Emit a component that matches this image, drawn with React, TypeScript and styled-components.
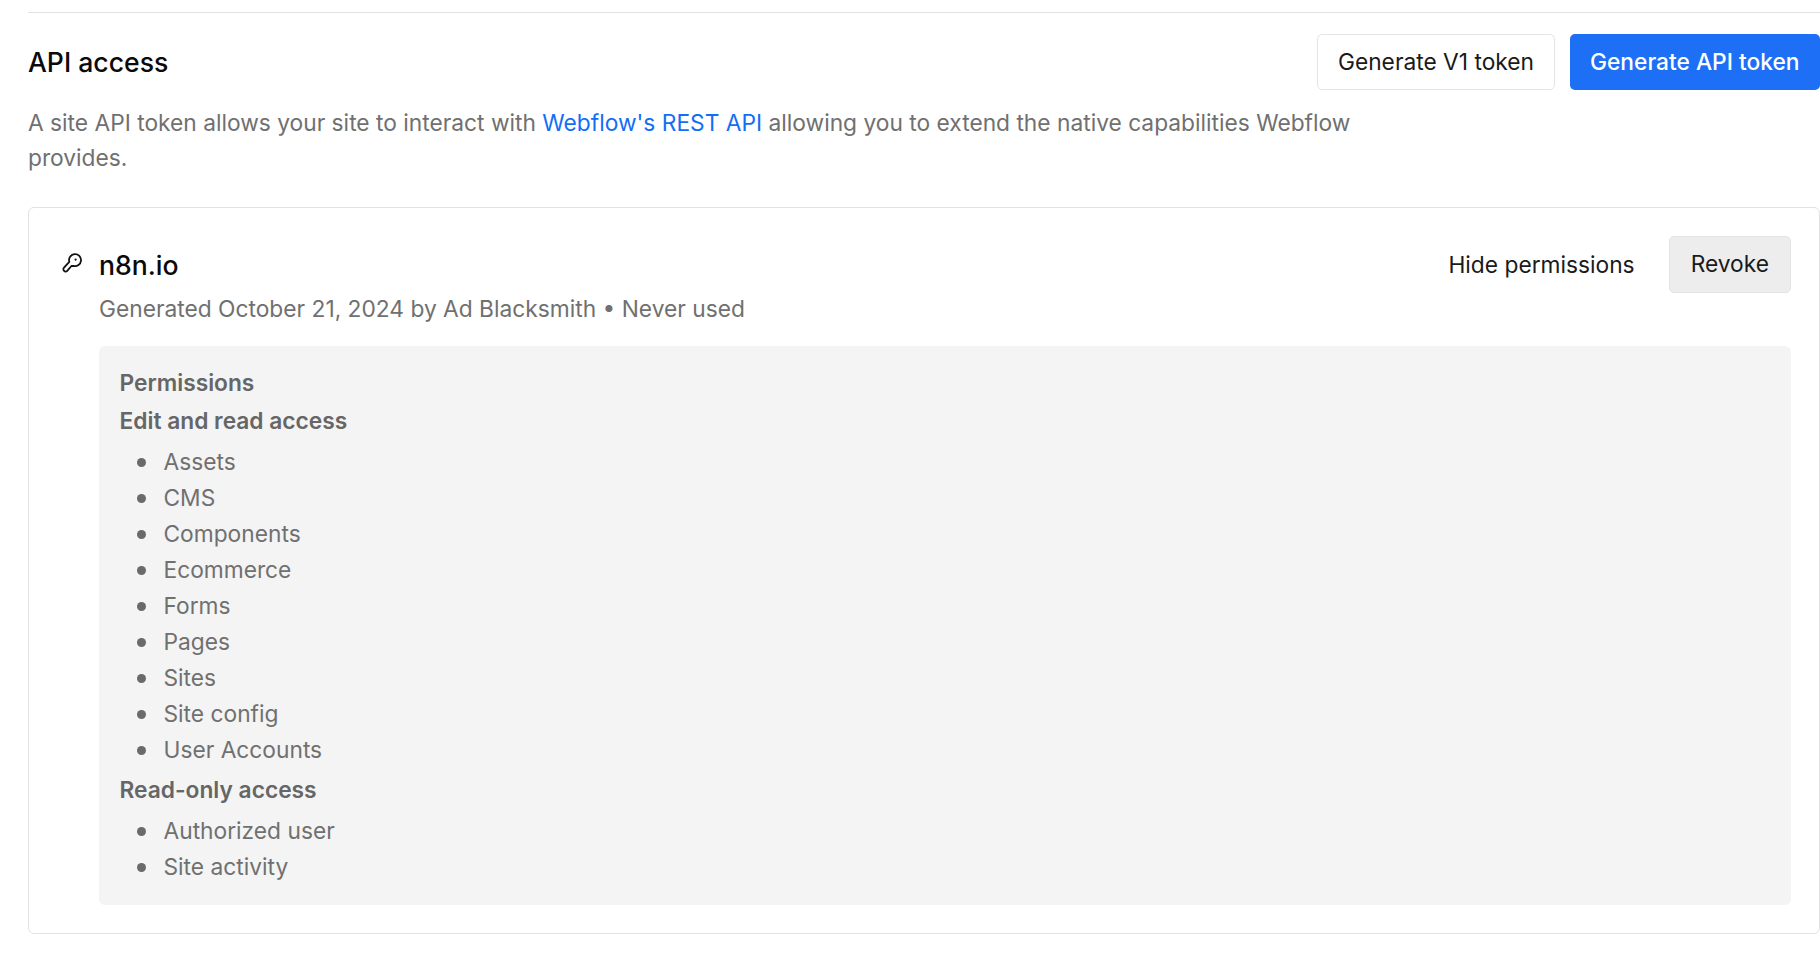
import React from 'react'
import styled, { createGlobalStyle } from 'styled-components'

const GlobalStyle = createGlobalStyle`
    html, body {
        margin: 0;
        padding: 0;
        background: #fff;
    }
    body {
        font-family: Inter, "Liberation Sans", sans-serif;
        font-size: 22.75px;
        color: #707070;
        overflow: hidden;
    }
`

const Page = styled.div`
    width: 1820px;
    height: 980px;
    padding: 12px 0 0 28px;
    box-sizing: border-box;
`

const Divider = styled.div`
    height: 1px;
    background: #e2e2e2;
`

const Header = styled.div`
    display: flex;
    align-items: center;
    justify-content: space-between;
    margin-top: 21px;
`

const Title = styled.h2`
    margin: 0;
    font-size: 26.6px;
    line-height: 32px;
    font-weight: 500;
    color: #0a0a0a;
`

const HeaderActions = styled.div`
    display: flex;
    gap: 15px;
`

const Button = styled.button<{ $variant?: 'primary' | 'outline' | 'muted' }>`
    height: ${p => (p.$variant === 'muted' ? 57 : 56)}px;
    padding: 0 ${p => (p.$variant === 'primary' ? 20.5 : p.$variant === 'muted' ? 21 : 19.5)}px 2px;
    box-sizing: border-box;
    border-radius: 5px;
    font-family: inherit;
    font-size: 22.75px;
    font-weight: ${p => (p.$variant === 'primary' ? 500 : 400)};
    color: ${p => (p.$variant === 'primary' ? '#fff' : '#1a1a1a')};
    background: ${p => (p.$variant === 'primary' ? '#1d6ff5' : p.$variant === 'muted' ? '#ededed' : '#fff')};
    border: ${p => (p.$variant === 'primary' ? 'none' : '1.5px solid #e4e4e4')};
`

const Description = styled.p`
    margin: 15px 0 0;
    max-width: 1380px;
    line-height: 35px;
`

const BlueLink = styled.a`
    color: #146ef5;
    text-decoration: none;
`

const Card = styled.div`
    margin-top: 32px;
    height: 727px;
    box-sizing: border-box;
    border: 1.5px solid #e2e2e2;
    border-radius: 6px;
    padding: 28px 28px 28px 29px;
`

const CardHead = styled.div`
    display: flex;
    align-items: flex-start;
    gap: 17px;
`

const KeyIcon = styled.svg`
    flex: none;
    width: 20px;
    height: 20px;
    margin: 16.5px 0 0 4px;
    color: #111;
`

const CardTitleBlock = styled.div`
    flex: 1;
`

const TokenName = styled.div`
    font-size: 26.6px;
    line-height: 32px;
    font-weight: 500;
    color: #0a0a0a;
    margin-top: 13px;
`

const Meta = styled.div`
    margin-top: 12px;
    line-height: 32px;
`

const CardActions = styled.div`
    display: flex;
    align-items: center;
    gap: 34px;
`

const TextAction = styled.span`
    color: #1a1a1a;
`

const Permissions = styled.div`
    margin: 21px 0 0 40.5px;
    height: 559px;
    box-sizing: border-box;
    padding: 20px 21px;
    background: #f4f4f4;
    border-radius: 6px;
`

const PermissionHeading = styled.div`
    font-weight: 600;
    line-height: 34px;
    margin-bottom: 4px;
    color: #666;
`

const PermissionList = styled.ul`
    margin: 6px 0 5px;
    padding: 0 0 0 17px;
    list-style: none;
`

const PermissionItem = styled.li`
    display: flex;
    align-items: center;
    gap: 18px;
    line-height: 36px;
    &::before {
        content: '';
        width: 9px;
        height: 9px;
        border-radius: 50%;
        background: #6a6a6a;
    }
`

const editAccess = ['Assets', 'CMS', 'Components', 'Ecommerce', 'Forms', 'Pages', 'Sites', 'Site config', 'User Accounts']
const readAccess = ['Authorized user', 'Site activity']

export default function App() {
    return (
        <Page>
            <GlobalStyle />
            <Divider />
            <Header>
                <Title>API access</Title>
                <HeaderActions>
                    <Button $variant="outline">Generate V1 token</Button>
                    <Button $variant="primary">Generate API token</Button>
                </HeaderActions>
            </Header>
            <Description>
                A site API token allows your site to interact with <BlueLink href="#">Webflow's REST API</BlueLink> allowing you to extend the native capabilities Webflow provides.
            </Description>
            <Card>
                <CardHead>
                    <KeyIcon viewBox="0 0 20 20" fill="none" stroke="currentColor" strokeWidth="1.8" strokeLinejoin="round">
                        <path d="M7.3 8.8A6 6 0 1 1 11.4 12.9L9.4 13 5.2 17.8A2.2 2.2 0 0 1 2 14.7Z" />
                        <circle cx="13.6" cy="6.6" r="1.1" fill="currentColor" stroke="none" />
                    </KeyIcon>
                    <CardTitleBlock>
                        <TokenName>n8n.io</TokenName>
                        <Meta>Generated October 21, 2024 by Ad Blacksmith • Never used</Meta>
                    </CardTitleBlock>
                    <CardActions>
                        <TextAction>Hide permissions</TextAction>
                        <Button $variant="muted">Revoke</Button>
                    </CardActions>
                </CardHead>
                <Permissions>
                    <PermissionHeading>Permissions</PermissionHeading>
                    <PermissionHeading>Edit and read access</PermissionHeading>
                    <PermissionList>
                        {editAccess.map(item => <PermissionItem key={item}>{item}</PermissionItem>)}
                    </PermissionList>
                    <PermissionHeading>Read-only access</PermissionHeading>
                    <PermissionList>
                        {readAccess.map(item => <PermissionItem key={item}>{item}</PermissionItem>)}
                    </PermissionList>
                </Permissions>
            </Card>
        </Page>
    )
}
